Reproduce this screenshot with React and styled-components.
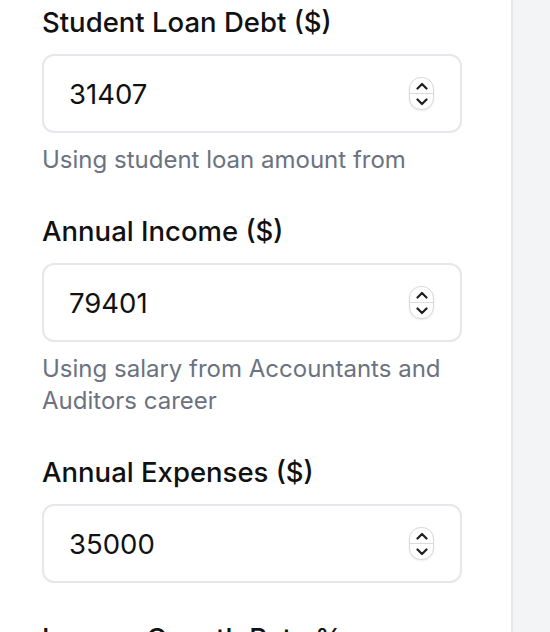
import React from "react";
import styled, { createGlobalStyle } from "styled-components";

const Global = createGlobalStyle`
  html, body { margin: 0; padding: 0; background: #ffffff; }
  body { font-family: Inter, "Noto Sans", "Liberation Sans", sans-serif; color: #111827; }
  * { box-sizing: border-box; }
`;

const Page = styled.div`
  display: flex;
  width: 550px;
  height: 632px;
  overflow: hidden;
`;

const Main = styled.div`
  flex: 0 0 511px;
  padding: 5px 0 0 42px;
  display: flex;
  flex-direction: column;
  gap: 38px;
  background: #ffffff;
`;

const Side = styled.div`
  flex: 1;
  background: #f3f4f6;
  border-left: 2px solid #e5e7eb;
`;

const Group = styled.div`
  width: 420px;
  display: flex;
  flex-direction: column;
`;

const Label = styled.label`
  font-size: 27.5px;
  line-height: 34px;
  font-weight: 500;
  color: #111111;
  margin-bottom: 15px;
  white-space: nowrap;
`;

const Field = styled.div`
  height: 79px;
  display: flex;
  align-items: center;
  border: 2px solid #e5e7eb;
  border-radius: 12px;
  padding: 0 26px 0 25px;
  background: #fff;
`;

const Input = styled.input`
  flex: 1;
  border: none;
  outline: none;
  background: transparent;
  font-family: inherit;
  font-size: 27.5px;
  color: #111111;
  padding: 0;
  min-width: 0;
`;

const Spinner = styled.div`
  width: 25px;
  height: 33px;
  border: 1px solid #d9d9d9;
  border-radius: 12px;
  background: #fff;
  box-shadow: 0 1px 2px rgba(0,0,0,0.08);
  display: flex;
  flex-direction: column;
  overflow: hidden;
`;

const SpinHalf = styled.div`
  flex: 1;
  display: flex;
  align-items: center;
  justify-content: center;
  border-top: ${(p) => (p.$bottom ? "1px solid #dcdcdc" : "none")};
`;

const Help = styled.p`
  margin: 11px 0 0;
  font-size: 24px;
  line-height: 32px;
  color: #6b7280;
`;

const Chevron = ({ up }) => (
  <svg width="12" height="8" viewBox="0 0 12 8" fill="none">
    <path
      d={up ? "M1.5 6.5 L6 2 L10.5 6.5" : "M1.5 1.5 L6 6 L10.5 1.5"}
      stroke="#1f1f1f"
      strokeWidth="2.2"
      strokeLinecap="round"
      strokeLinejoin="round"
    />
  </svg>
);

const NumberField = ({ value }) => (
  <Field>
    <Input type="text" defaultValue={value} />
    <Spinner>
      <SpinHalf>
        <Chevron up />
      </SpinHalf>
      <SpinHalf $bottom>
        <Chevron />
      </SpinHalf>
    </Spinner>
  </Field>
);

const fields = [
  { label: "Student Loan Debt ($)", value: "31407", help: "Using student loan amount from" },
  { label: "Annual Income ($)", value: "79401", help: "Using salary from Accountants and Auditors career" },
  { label: "Annual Expenses ($)", value: "35000" },
  { label: "Income Growth Rate %", value: "3" },
];

export default function App() {
  return (
    <>
      <Global />
      <Page>
        <Main>
          {fields.map((f) => (
            <Group key={f.label}>
              <Label>{f.label}</Label>
              <NumberField value={f.value} />
              {f.help && <Help>{f.help}</Help>}
            </Group>
          ))}
        </Main>
        <Side />
      </Page>
    </>
  );
}
